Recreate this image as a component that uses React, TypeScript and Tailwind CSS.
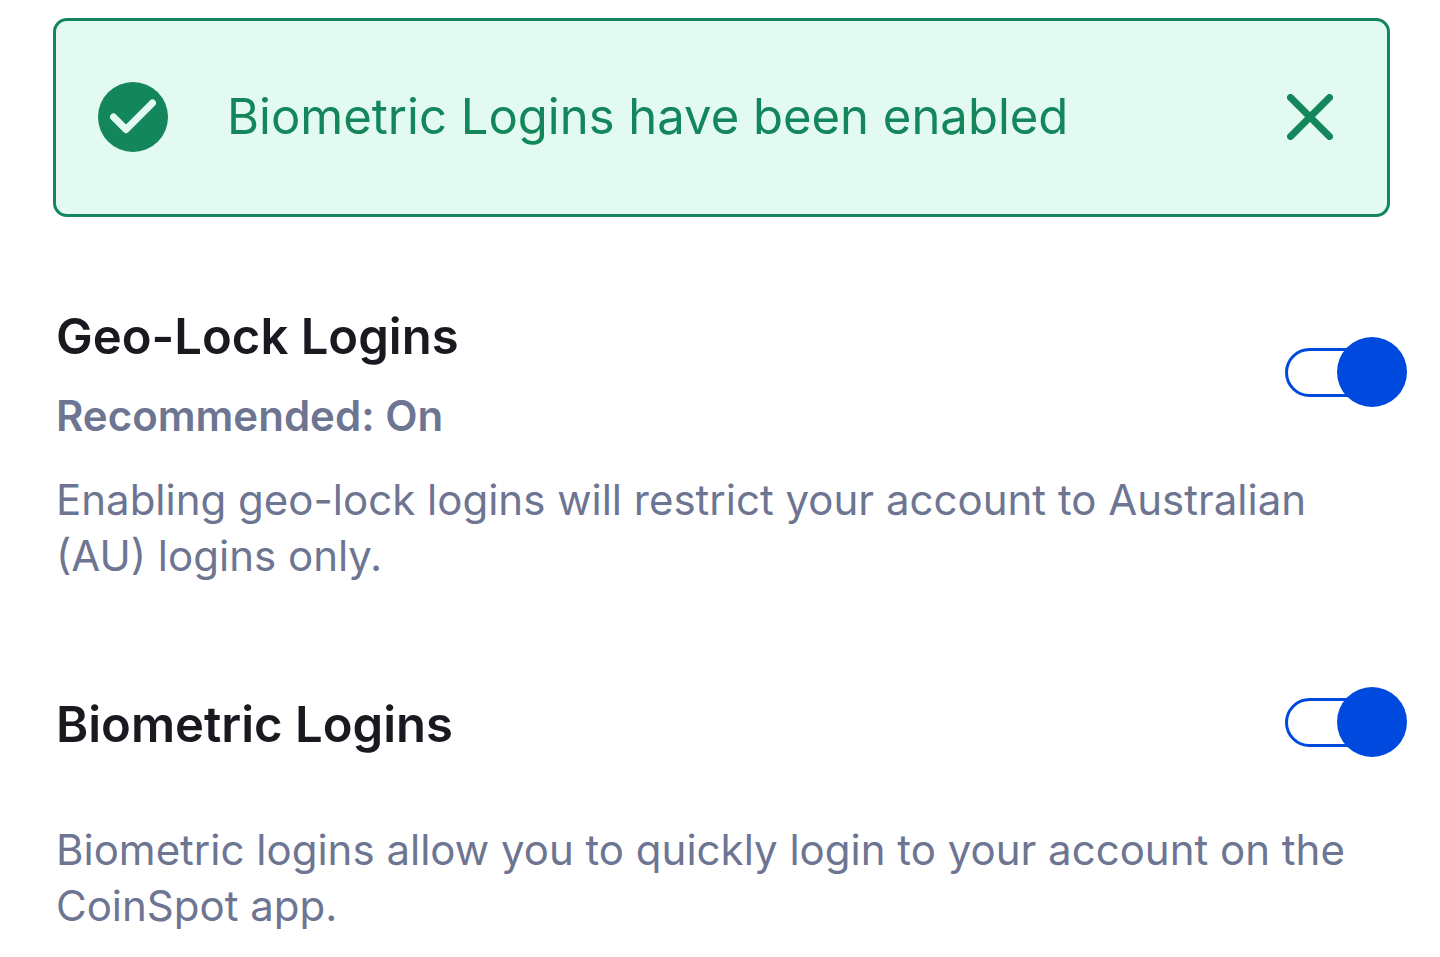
import { useState } from "react";

function Toggle({ id, label }: { id: string; label: string }) {
  const [on, setOn] = useState(true);
  return (
    <label htmlFor={id} className="relative flex h-[70px] w-[122px] shrink-0 cursor-pointer items-center">
      <input
        id={id}
        type="checkbox"
        role="switch"
        aria-label={label}
        checked={on}
        onChange={() => setOn(!on)}
        className="peer h-[49px] w-[104px] appearance-none rounded-full border-3 border-[#0049df] bg-white"
      />
      <span className="absolute left-0 size-[70px] rounded-full bg-[#8a91a8] peer-checked:left-[52px] peer-checked:bg-[#0049df]" />
    </label>
  );
}

function Banner() {
  const [open, setOpen] = useState(true);
  if (!open) return null;
  return (
    <div
      role="status"
      className="mr-[50px] ml-[53px] flex h-[199px] items-center rounded-[14px] border-3 border-[#13865b] bg-[#e3faf3] pr-[54px] pb-[2px] pl-[42px] text-[#13865b]"
    >
      <svg viewBox="0 0 70 70" className="size-[70px] shrink-0" aria-hidden="true">
        <circle cx="35" cy="35" r="35" fill="#13865b" />
        <path d="M15.500 35 L28 47.500 L54.500 21" fill="none" stroke="#e3faf3" strokeWidth="7" strokeLinecap="round" strokeLinejoin="round" />
      </svg>
      <p className="ml-[59px] flex-1 text-[49px] leading-[60px]">Biometric Logins have been enabled</p>
      <button type="button" aria-label="Dismiss" onClick={() => setOpen(false)} className="size-[46px] shrink-0">
        <svg viewBox="0 0 46 46" className="size-[46px]" aria-hidden="true">
          <path d="M3.500 3.500 L42.500 42.500 M42.500 3.500 L3.500 42.500" fill="none" stroke="#13865b" strokeWidth="7" strokeLinecap="round" />
        </svg>
      </button>
    </div>
  );
}

export default function App() {
  return (
    <main className="min-h-screen bg-white pt-[18px] pb-5 font-['Inter',sans-serif] text-[#6d7592]">
      <Banner />
      <section className="mt-[90px] pr-[33px] pl-14">
        <div className="flex items-start justify-between">
          <div>
            <h2 className="text-[49px] leading-[60px] font-semibold text-[#191a20]">Geo-Lock Logins</h2>
            <p className="mt-[21px] text-[42px] leading-[56px] font-semibold">Recommended: On</p>
          </div>
          <div className="mt-[30px]">
            <Toggle id="geo-lock" label="Geo-Lock Logins" />
          </div>
        </div>
        <p className="mt-7 pr-5 text-[42px] leading-[56px]">
          Enabling geo-lock logins will restrict your account to Australian (AU) logins only.
        </p>
      </section>
      <section className="mt-[103px] pr-[33px] pl-14">
        <div className="flex items-center justify-between">
          <h2 className="pt-1.5 text-[49px] leading-[60px] font-semibold text-[#191a20]">Biometric Logins</h2>
          <Toggle id="biometric" label="Biometric Logins" />
        </div>
        <p className="mt-[65px] pr-5 text-[42px] leading-[56px]">
          Biometric logins allow you to quickly login to your account on the CoinSpot app.
        </p>
      </section>
    </main>
  );
}
